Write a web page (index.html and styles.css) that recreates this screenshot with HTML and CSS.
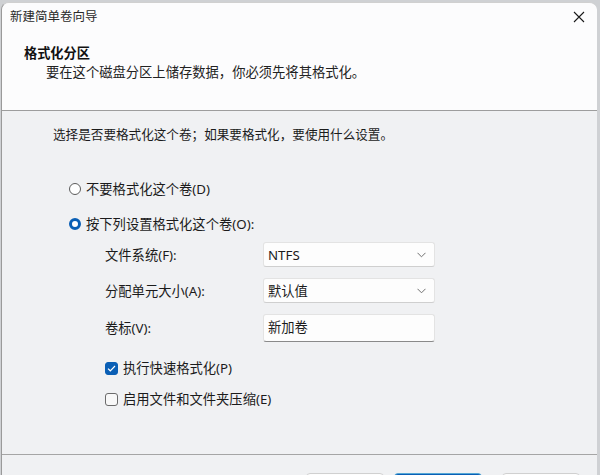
FILE: index.html
```html
<!DOCTYPE html>
<html lang="zh-CN">
<head>
<meta charset="utf-8">
<title>新建简单卷向导</title>
<link rel="stylesheet" href="styles.css">
</head>
<body>
<div class="window">
  <div class="titlebar">
    <span class="title">新建简单卷向导</span>
    <span class="close">
      <svg width="12" height="12" viewBox="0 0 12 12"><path d="M1 1L11 11M11 1L1 11" stroke="#1a1a1a" stroke-width="1.1" fill="none"/></svg>
    </span>
  </div>
  <div class="header">
    <div class="h-title">格式化分区</div>
    <div class="h-sub">要在这个磁盘分区上储存数据，你必须先将其格式化。</div>
  </div>
  <div class="content">
    <div class="intro">选择是否要格式化这个卷；如果要格式化，要使用什么设置。</div>
    <div class="radio-row r1"><span class="radio"></span><span>不要格式化这个卷(D)</span></div>
    <div class="radio-row r2"><span class="radio on"></span><span>按下列设置格式化这个卷(O):</span></div>
    <div class="form">
      <div class="label">文件系统(F):</div>
      <div class="select">NTFS<svg class="chev" width="9" height="6" viewBox="0 0 9 6"><path d="M0.5 0.8L4.5 4.8L8.5 0.8" stroke="#707070" stroke-width="1" fill="none"/></svg></div>
      <div class="label">分配单元大小(A):</div>
      <div class="select">默认值<svg class="chev" width="9" height="6" viewBox="0 0 9 6"><path d="M0.5 0.8L4.5 4.8L8.5 0.8" stroke="#707070" stroke-width="1" fill="none"/></svg></div>
      <div class="label">卷标(V):</div>
      <div class="textbox">新加卷</div>
    </div>
    <div class="check-row c1"><span class="check on"><svg width="9" height="7" viewBox="0 0 9 7"><path d="M1 3.6L3.3 5.8L8 1" stroke="#fff" stroke-width="1.2" fill="none"/></svg></span><span>执行快速格式化(P)</span></div>
    <div class="check-row c2"><span class="check"></span><span>启用文件和文件夹压缩(E)</span></div>
  </div>
  <div class="footer">
    <span class="btn"></span>
    <span class="btn primary"></span>
    <span class="btn"></span>
  </div>
</div>
</body>
</html>
```
FILE: styles.css
```css
html, body {
  margin: 0;
  padding: 0;
}
body {
  width: 600px;
  height: 475px;
  overflow: hidden;
  background: #cfd1d4;
  font-family: "Noto Sans", "Noto Sans CJK SC", sans-serif;
  font-size: 13px;
  color: #1b1b1b;
}
.window {
  margin: 2px 3px 0 1px;
  height: 480px;
  background: #f0f1f3;
  border-left: 1px solid #9a9a9a;
  border-top: 1px solid #d0d0d0;
  border-radius: 8px 8px 0 0;
  overflow: hidden;
  display: flex;
  flex-direction: column;
}
.titlebar {
  height: 27px;
  background: #fcfcfd;
  display: flex;
  align-items: center;
  justify-content: space-between;
  padding: 0 10px 0 8px;
  flex: none;
}
.title {
  font-size: 12.5px;
  color: #2a2a2a;
  line-height: 18px;
}
.close {
  display: flex;
  align-items: center;
  margin-right: 2px;
  margin-top: 1px;
}
.header {
  height: 81px;
  background: #fcfcfd;
  border-bottom: 1px solid #9d9d9d;
  padding: 14px 0 0 22px;
  box-sizing: border-box;
  flex: none;
}
.h-title {
  font-weight: bold;
  font-size: 13.2px;
  line-height: 18px;
  color: #111;
}
.h-sub {
  margin-top: 1px;
  padding-left: 22px;
  line-height: 18px;
  font-size: 13.3px;
  color: #222;
}
.content {
  flex: none;
  height: 344px;
  padding: 15px 0 0 51px;
  box-sizing: border-box;
  border-bottom: 1px solid #a5a5a5;
}
.intro {
  line-height: 18px;
  font-size: 12.6px;
}
.radio-row, .check-row {
  display: flex;
  align-items: center;
  line-height: 18px;
  gap: 5px;
  font-size: 13.3px;
}
.r1 {
  margin-top: 36px;
  margin-left: 16px;
}
.r2 {
  margin-top: 17px;
  margin-left: 16px;
}
.radio {
  width: 10px;
  height: 10px;
  border: 1px solid #5c5c5c;
  border-radius: 50%;
  background: #fff;
  flex: none;
}
.radio.on {
  width: 6px;
  height: 6px;
  border: 3px solid #0a5fb5;
  background: #fff;
}
.form {
  margin-top: 9px;
  margin-left: 52px;
  display: grid;
  grid-template-columns: 158px 172px;
  grid-template-rows: 25px 25px 28px;
  row-gap: 11px;
  align-items: center;
  font-size: 13.3px;
}
.label {
  line-height: 18px;
}
.select, .textbox {
  height: 100%;
  box-sizing: border-box;
  background: #fdfdfd;
  border: 1px solid #e3e3e3;
  border-bottom-color: #cfcfcf;
  border-radius: 3px;
  display: flex;
  align-items: center;
  justify-content: space-between;
  padding: 0 8px 0 4px;
}
.textbox {
  border-bottom: 1px solid #8a8a8a;
  align-items: flex-start;
  padding-top: 2px;
}
.chev {
  margin-top: 1px;
}
.check {
  width: 11px;
  height: 11px;
  border: 1px solid #6b6b6b;
  border-radius: 3px;
  background: #f8f8f8;
  flex: none;
  display: flex;
  align-items: center;
  justify-content: center;
}
.check.on {
  background: #0a5fb5;
  border-color: #0a5fb5;
}
.c1 {
  margin-top: 17px;
  margin-left: 52px;
}
.c2 {
  margin-top: 13px;
  margin-left: 52px;
}
.footer {
  flex: 1;
  display: flex;
  gap: 10px;
  padding: 18px 0 0 304px;
  background: #f0f1f3;
}
.btn {
  width: 78px;
  height: 30px;
  background: #fdfdfd;
  border: 1px solid #d0d0d0;
  border-radius: 4px;
  box-sizing: border-box;
}
.btn.primary {
  width: 88px;
  background: #0a5fb5;
  border-color: #55a8d6;
  margin-right: 10px;
}
```
